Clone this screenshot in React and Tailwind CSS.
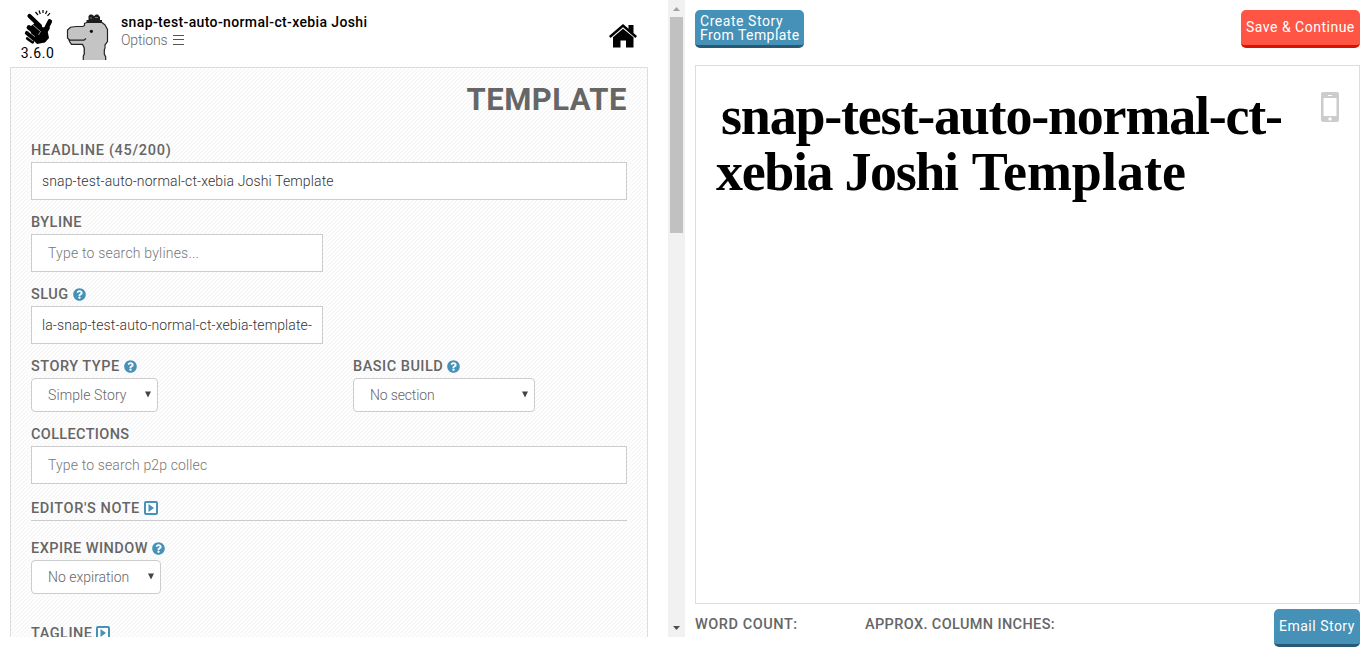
import React from "react";
import { FaQuestionCircle } from "react-icons/fa";

const label = "font-medium text-[14.5px] leading-[20px] text-[#666] whitespace-nowrap";
const light = "font-light text-[14px] whitespace-nowrap";

function Label({ children, icon, className }) {
  return (
    <div className={`${label} flex h-5 items-center gap-1 ${className || ""}`}>
      <span>{children}</span>
      {icon === "help" && <FaQuestionCircle className="mb-px h-[13px] w-[13px] text-[#4591b8]" />}
      {icon === "expand" && <Expand />}
    </div>
  );
}

function Expand() {
  return (
    <svg width="14" height="14" viewBox="0 0 14 14" className="mb-0.5 shrink-0">
      <rect x="1" y="1" width="12" height="12" rx="1" fill="#fff" stroke="#4591b8" strokeWidth="2" />
      <path d="M4.500 3L10 7L4.500 11Z" fill="#4591b8" />
    </svg>
  );
}

function Field({ children, className }) {
  return (
    <div className={`flex h-[38px] items-center border border-[#ccc] bg-white ${light} ${className || ""}`}>
      {children}
    </div>
  );
}

function Select({ children, className }) {
  return (
    <div className={`flex h-[34px] items-center justify-between rounded-[4px] border border-[#ccc] bg-white pl-4 pr-[6px] text-[#666] ${light} ${className || ""}`}>
      <span>{children}</span>
      <svg width="6" height="7" viewBox="0 0 6 7" className="mb-px">
        <path d="M0 0.500H6L3 6.500Z" fill="#444" />
      </svg>
    </div>
  );
}

function Snap() {
  return (
    <svg width="30" height="36" viewBox="0 0 30 36">
      <path d="M8 17L13 13L19 18L21.500 18.500L24 15L27 19L24.800 23L26 29L22 33.500L14 35L10 31L8 24Z" fill="#000" />
      <g stroke="#000" strokeLinecap="round" fill="none">
        <path d="M6.500 7L17 17" strokeWidth="4.200" />
        <path d="M26.800 12.500L22.500 21" strokeWidth="4.600" />
        <path d="M6 18.500L14 25" strokeWidth="4.800" />
        <path d="M4 24L11 29.500" strokeWidth="4.200" />
        <path d="M4.500 29.500L9.500 33" strokeWidth="3.200" />
      </g>
      <path d="M9.500 15.500L17.500 22.500L15.500 26M3 20.800L12 27.700M2.500 26.500L10 32" stroke="#fff" strokeWidth="0.600" fill="none" />
      <path d="M12.500 3L15 6M16 1.500L17.300 5M20 1V4M24 1.800L22.500 5M27 4.200L24.500 6.800" stroke="#000" strokeWidth="1.200" />
    </svg>
  );
}

function Dinosaur() {
  return (
    <svg width="43" height="46" viewBox="0 0 43 46">
      <path d="M17.500 46V33L15 30H5L1.500 24V16L4 13H17L21 8.500H36L41.500 15V28L38.500 32V38L40 46Z" fill="#c4c4c4" />
      <g fill="none" stroke="#222" strokeWidth="1.200">
        <path d="M17.300 46V42L18.300 40V34L16.500 30.300H5.500L3.500 27.500V26L1.500 24V16L4.500 13.200L10 12.500H17L18.500 11.500V9.500L21 8.500" />
        <path d="M36 8.500L39 11L41.500 15.500V27.500L39 31V34L38.300 36V40L39.700 43V46" />
        <path d="M2.500 26.200H18L20 24.500" />
      </g>
      <path d="M20.500 6H36V9H20.500ZM22.500 6V2L24 .500H26L28 2L30 .500H32L34 3V6Z" fill="#1c1c1c" />
      <path d="M24 4H26M29 3.500H32" stroke="#777" />
      <circle cx="25.400" cy="17.300" r="1.600" fill="#111" />
    </svg>
  );
}

function Home() {
  return (
    <svg width="28" height="24" viewBox="0 0 28 24">
      <path d="M14 0L19.500 4.800V1H24.500V9L28 12L26.400 14L14 3.300L1.600 14L0 12Z" />
      <path d="M4 13.300L14 4.800L24.500 13.300V23.500H17V16.500H11.500V23.500H4Z" />
    </svg>
  );
}

function Button({ children, className }) {
  return (
    <div className={`flex h-[38px] items-center rounded-[5px] border-b-[3px] text-[14px] leading-[14px] text-white whitespace-nowrap ${className}`}>
      {children}
    </div>
  );
}

export default function App() {
  return (
    <div className="flex h-[656px] w-[1370px] overflow-hidden bg-white font-['Roboto',sans-serif]">
      <div className="flex h-[637px] w-[668px] shrink-0 flex-col overflow-hidden pl-[10px] pr-5">
        <header className="flex h-[67px] shrink-0 items-start">
          <div className="ml-[11px] flex w-[33px] flex-col items-center pt-[9px]">
            <Snap />
            <span className="text-[14px] leading-[16px] tracking-[0.55px]">3.6.0</span>
          </div>
          <div className="ml-3 pt-[14px]"><Dinosaur /></div>
          <div className="ml-3 flex-1 pt-[12px]">
            <div className="text-[14px] font-medium leading-[20px] tracking-[0.37px] whitespace-nowrap">snap-test-auto-normal-ct-xebia Joshi</div>
            <div className="flex items-center gap-[5px] text-[14px] font-light leading-[18px] text-[#666]">
              <span className="-mt-px tracking-[-0.15px]">Options</span>
              <svg width="11" height="10" viewBox="0 0 11 10" className="-mt-px"><path d="M0 .5H11M0 4.500H11M0 9.500H11" stroke="#555" /></svg>
            </div>
          </div>
          <div className="mr-[11px] pt-[23.5px]"><Home /></div>
        </header>
        <main className="flex h-[700px] shrink-0 flex-col border border-[#ddd] bg-[repeating-linear-gradient(135deg,#fff_0px,#fff_1.414px,#f7f7f7_1.414px,#f7f7f7_2.828px)] px-5">
          <h1 className="mt-[13px] h-[38px] self-end text-[31px] font-bold leading-[38px] tracking-[0.5px] text-[#666]">TEMPLATE</h1>
          <Label className="mt-[22px] tracking-[0.7px]">HEADLINE (45/200)</Label>
          <Field className="mt-px px-[10px] tracking-[0.13px] text-[#333]"><span>snap-test-auto-normal-ct-xebia Joshi Template</span></Field>
          <Label className="mt-[13px] tracking-[0.5px]">BYLINE</Label>
          <Field className="mt-px w-[292px] px-4 tracking-[0.2px] text-[#777]"><span>Type to search bylines...</span></Field>
          <Label icon="help" className="mt-[13px] tracking-[0.5px]">SLUG</Label>
          <Field className="mt-px w-[292px] px-[10px] tracking-[0.11px] text-[#333]"><span>la-snap-test-auto-normal-ct-xebia-template-</span></Field>
          <div className="mt-[13px] flex">
            <div className="w-[322px]">
              <Label icon="help" className="tracking-[0.5px]">STORY TYPE</Label>
              <Select className="mt-px w-[127px] tracking-[0.1px]">Simple Story</Select>
            </div>
            <div>
              <Label icon="help" className="tracking-[0.5px]">BASIC BUILD</Label>
              <Select className="mt-px w-[182px] tracking-[-0.15px]">No section</Select>
            </div>
          </div>
          <Label className="mt-[13px] tracking-[0.35px]">COLLECTIONS</Label>
          <Field className="mt-px px-4 tracking-[0.14px] text-[#777]"><span>Type to search p2p collec</span></Field>
          <div className="mt-[15px] h-[22px] border-b border-[#ccc]"><Label icon="expand" className="tracking-[0.6px]">EDITOR'S NOTE</Label></div>
          <Label icon="help" className="mt-[18px] tracking-[0.45px]">EXPIRE WINDOW</Label>
          <Select className="mt-px w-[130px]">No expiration</Select>
          <Label icon="expand" className="mt-[30px] tracking-[0.5px]">TAGLINE</Label>
        </main>
      </div>
      <div className="flex h-[637px] w-[17px] shrink-0 flex-col items-center bg-[#f1f1f1]">
        <div className="flex h-[17px] items-center"><svg width="7" height="4"><path d="M0 4L3.500 0L7 4Z" fill="#a3a3a3" /></svg></div>
        <div className="h-[216px] w-[13px] bg-[#c1c1c1]" />
        <div className="mt-auto flex h-[19px] items-center"><svg width="7" height="4"><path d="M0 0L3.500 4L7 0Z" fill="#505050" /></svg></div>
      </div>
      <div className="flex flex-1 flex-col pl-[10px] pr-[10px] pt-[10px]">
        <div className="flex h-[55px] items-start justify-between">
          <Button className="w-[109px] border-[#285a76] bg-[#4591b8] pl-[5px] tracking-[0.45px]"><span><span className="tracking-[0.55px]">Create Story</span><br />From Template</span></Button>
          <Button className="w-[119px] border-[#dd1200] bg-[#ff5544] pb-px pl-[5px] tracking-[0.5px]">Save &amp; Continue</Button>
        </div>
        <div className="flex h-[539px] justify-between border border-[#ddd] pl-5 pr-[20px]">
          <h2 className="pt-[22px] font-['Liberation_Serif',serif] text-[54px] font-bold leading-[56px] tracking-[-1.2px] whitespace-nowrap"><span className="ml-[5px]">snap-test-auto-normal-ct-</span><br /><span className="tracking-[-1.35px]">xebia Joshi </span><span className="ml-[2px] tracking-[0px]">Template</span></h2>
          <svg width="18" height="30" viewBox="0 0 18 30" className="mt-[26px] shrink-0"><path fillRule="evenodd" d="M2 0H16Q18 0 18 2V28Q18 30 16 30H2Q0 30 0 28V2Q0 0 2 0ZM2.500 6V24H15.500V6ZM7 3V4H11V3ZM9 25.200A1.700 1.700 0 1 0 9 28.600A1.700 1.700 0 1 0 9 25.200Z" fill="#ccc" /></svg>
        </div>
        <div className="flex pt-[5px]">
          <div className={`${label} w-[170px] pt-[6px] tracking-[0.55px]`}>WORD COUNT:</div>
          <div className={`${label} pt-[6px] tracking-[0.37px]`}>APPROX. COLUMN INCHES:</div>
          <Button className="ml-auto w-[86px] border-[#285a76] bg-[#4591b8] pb-px pl-[5px] tracking-[0.5px]">Email Story</Button>
        </div>
      </div>
    </div>
  );
}
